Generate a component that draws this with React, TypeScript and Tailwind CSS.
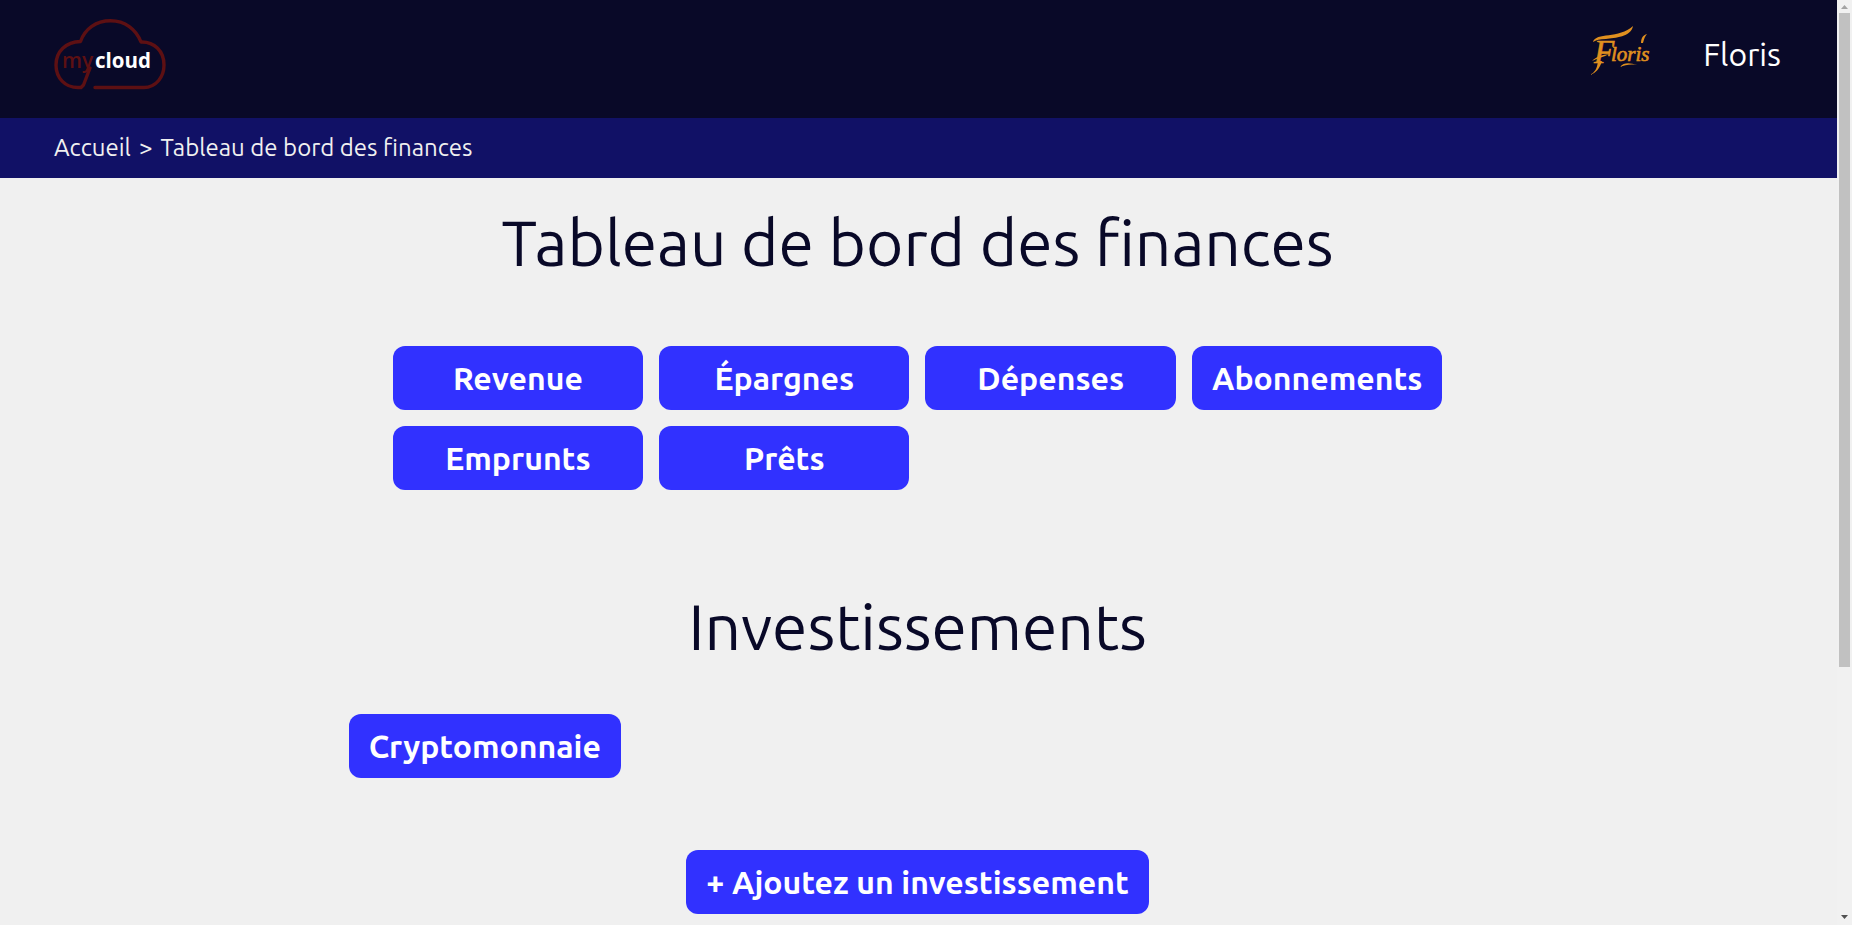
import React from "react";

const finances = ["Revenue", "Épargnes", "Dépenses", "Abonnements", "Emprunts", "Prêts"];

const buttonClass =
  "h-16 cursor-pointer rounded-xl bg-[#3131ff] px-5 text-[32px] leading-10 font-semibold whitespace-nowrap text-white hover:bg-[#1c1cd8]";

function CloudLogo() {
  return (
    <svg viewBox="14 18 112 72" className="h-[72px] w-28" role="img" aria-label="mycloud">
      <path
        d="M94 87.5 H104 C116 87.5 124 77 124 65 C124 51 114 41.500 101 42 C96 29 85 20.800 70.500 20.800 C56 20.800 45 29 40.500 41.500 C26 42 16 51 16 65 C16 78 25 87.500 38 87.500 H41 L43.500 85 L50 68 M94 87.500 H55"
        fill="none"
        stroke="#5d1013"
        strokeWidth="3.4"
        strokeLinecap="round"
        strokeLinejoin="round"
      />
      <g fontFamily="'Open Sans', 'Noto Sans', sans-serif">
        <text x="22" y="68" fontSize="21" fontWeight="600" fill="#5d1013">
          my
        </text>
        <text x="111" y="68" fontSize="20.5" textAnchor="end" fontWeight="700" fill="#ffffff">
          cloud
        </text>
      </g>
    </svg>
  );
}

function Signature() {
  return (
    <svg viewBox="0 0 62 50" className="h-[50px] w-[62px]" role="img" aria-label="Signature Floris">
      <g fill="#e0901f" fontFamily="'Liberation Serif', serif" fontStyle="italic">
        <text x="5" y="37" fontSize="33" stroke="#e0901f" strokeWidth="0.6">
          F
          <tspan x="22" y="35" fontSize="21">
            loris
          </tspan>
        </text>
        <path d="M4 16 C7 6 30 13 44 0 C42 11 26 12 17 13 C11 13 7 14 4 16 Z" />
        <path d="M13 35 C11 42 7 47 1 49 C6 46 8 43 9 35 Z" />
        <path d="M31 41 C35 36 41 37 48 39 C41 38 36 39 31 41 Z" />
        <path d="M3 35 C8 30 14 29 20 28 C15 31 9 32 3 35 Z" />
        <path d="M52 17 C52 12 54 9 58 8 C56 10 55 13 54 17 Z" />
      </g>
    </svg>
  );
}

function ScrollRail() {
  return (
    <div aria-hidden="true" className="flex w-[15px] shrink-0 flex-col items-center bg-[#f1f1f1]">
      <div className="flex h-[13px] w-full items-center justify-center">
        <svg viewBox="0 0 7 4" className="h-1 w-[7px]">
          <path d="M0 4 L3.500 0 L7 4 Z" fill="#a3a3a3" />
        </svg>
      </div>
      <div className="flex w-full flex-1 flex-col items-center">
        <div className="h-[73%] w-[11px] bg-[#c1c1c1]" />
      </div>
      <div className="flex h-4 w-full items-center justify-center">
        <svg viewBox="0 0 7 4" className="h-1 w-[7px]">
          <path d="M0 0 H7 L3.500 4 Z" fill="#505050" />
        </svg>
      </div>
    </div>
  );
}

export default function App() {
  return (
    <div className="flex h-screen bg-[#f0f0f0] font-['Ubuntu','Noto_Sans',sans-serif] text-[#090928]">
      <div className="min-w-0 flex-1 overflow-hidden">
        <header className="flex h-[118px] items-start justify-between bg-[#090928] pt-[18px] pr-14 pl-[54px]">
          <a href="#accueil">
            <CloudLogo />
          </a>
          <div className="flex items-start gap-[52px]">
            <div className="pt-2">
              <Signature />
            </div>
            <a href="#profil" className="pt-1 text-[32px] leading-[64px] font-normal text-white">
              Floris
            </a>
          </div>
        </header>
        <nav
          aria-label="Fil d'Ariane"
          className="flex h-[60px] items-center gap-2 bg-[#111166] px-[54px] text-[24px] font-normal text-[#f0f0f0]"
        >
          <a href="#accueil">Accueil</a>
          <span>&gt;</span>
          <a href="#finances">Tableau de bord des finances</a>
        </nav>
        <main className="flex flex-col items-center pr-0.5">
          <h1 className="pt-6 text-[64px] leading-[80px] font-normal">Tableau de bord des finances</h1>
          <div className="mt-16 grid w-[57.2%] grid-cols-4 gap-4">
            {finances.map((label) => (
              <button key={label} type="button" className={buttonClass}>
                {label}
              </button>
            ))}
          </div>
          <h2 className="mt-24 text-[64px] leading-[80px] font-normal">Investissements</h2>
          <div className="mt-12 flex w-[62%]">
            <button type="button" className={buttonClass}>
              Cryptomonnaie
            </button>
          </div>
          <button type="button" className={`mt-[72px] ${buttonClass}`}>
            + Ajoutez un investissement
          </button>
        </main>
      </div>
      <ScrollRail />
    </div>
  );
}
